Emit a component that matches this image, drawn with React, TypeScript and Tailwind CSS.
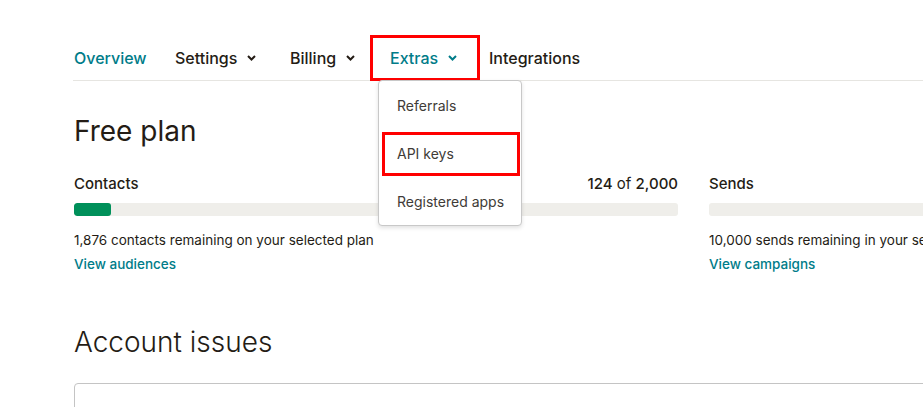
import React from "react";

const TEAL = "text-[#007c89]";

function Chevron({ className = "" }: { className?: string }) {
  return (
    <svg width="9" height="6" viewBox="0 0 9 6" className={className} aria-hidden="true">
      <path d="M1 1l3.5 3.5L8 1" fill="none" stroke="currentColor" strokeWidth="2" />
    </svg>
  );
}

function NavItem({
  label,
  width,
  caret,
  active,
}: {
  label: string;
  width: string;
  caret?: boolean;
  active?: boolean;
}) {
  return (
    <div className={`${width} flex items-center gap-[10px] shrink-0`}>
      <span className={active ? TEAL : "text-[#241c15]"}>{label}</span>
      {caret && <Chevron className={active ? TEAL : "text-[#241c15]"} />}
    </div>
  );
}

function Meter({
  label,
  used,
  total,
  remaining,
  link,
  showCount,
}: {
  label: string;
  used: number;
  total: number;
  remaining: string;
  link: string;
  showCount?: boolean;
}) {
  const pct = (used / total) * 100;
  return (
    <div className="w-[604px] shrink-0">
      <div className="flex items-center justify-between h-[20px] text-[15px] text-[#241c15]">
        <span className="font-medium">{label}</span>
        {showCount && (
          <span>
            <span className="font-medium">{used.toLocaleString("en-US")}</span>
            <span> of </span>
            <span className="font-medium">{total.toLocaleString("en-US")}</span>
          </span>
        )}
      </div>
      <div className="mt-[9px] h-[13px] rounded-[3px] bg-[#efeeea] overflow-hidden">
        {used > 0 && <div className="h-full rounded-[3px] bg-[#00905a]" style={{ width: `${pct}%` }} />}
      </div>
      <p className="mt-[14px] text-[13.5px] leading-[20px] text-[#241c15] whitespace-nowrap">{remaining}</p>
      <a className={`block mt-[4px] text-[13.5px] leading-[20px] font-medium ${TEAL}`}>{link}</a>
    </div>
  );
}

export default function App() {
  return (
    <div
      className="relative w-[923px] h-[407px] overflow-hidden bg-white"
      style={{ fontFamily: "Inter, 'Noto Sans', sans-serif" }}
    >
      <div className="pt-[35px] pl-[73px]">
        {/* top tabs */}
        <nav className="relative flex items-center h-[46px] border-b border-[#e6e5e1] pl-[1px] text-[16px] font-[450]">
          <NavItem label="Overview" width="w-[101px]" active />
          <NavItem label="Settings" width="w-[115px]" caret />
          <NavItem label="Billing" width="w-[100px]" caret />
          <div className="relative w-[99px] shrink-0 self-stretch flex items-center">
            <NavItem label="Extras" width="w-[99px]" caret active />
            <div className="absolute left-[-20px] top-0 w-[110px] h-[46px] border-[3px] border-[#ff0000]" />
            {/* dropdown menu */}
            <div className="absolute left-[-12px] top-[45px] w-[144px] z-10 rounded-[4px] border border-[#c8c8c8] bg-white shadow-[0_2px_4px_rgba(0,0,0,0.12)] text-[14px] font-normal text-[#403b37]">
              <div className="h-[48px] flex items-center pl-[18px]">Referrals</div>
              <div className="relative h-[48px] flex items-center pl-[18px]">
                API keys
                <div className="absolute left-[3px] top-[3px] w-[138px] h-[44px] border-[3px] border-[#ff0000]" />
              </div>
              <div className="h-[48px] flex items-center pl-[18px]">Registered apps</div>
            </div>
          </div>
          <NavItem label="Integrations" width="w-[120px]" />
        </nav>

        <div className="pl-[1px]">
          <h1 className="mt-[30px] text-[28px] leading-[40px] text-[#241c15]">Free plan</h1>

          <div className="mt-[23px] flex gap-[31px]">
            <Meter
              label="Contacts"
              used={124}
              total={2000}
              showCount
              remaining="1,876 contacts remaining on your selected plan"
              link="View audiences"
            />
            <Meter
              label="Sends"
              used={0}
              total={10000}
              remaining="10,000 sends remaining in your selected plan"
              link="View campaigns"
            />
          </div>

          <h2 className="mt-[48px] text-[28px] leading-[40px] font-light text-[#241c15]">Account issues</h2>
          <div className="mt-[21px] h-[80px] w-[900px] rounded-[4px] border border-[#c4c4c4]" />
        </div>
      </div>
    </div>
  );
}
